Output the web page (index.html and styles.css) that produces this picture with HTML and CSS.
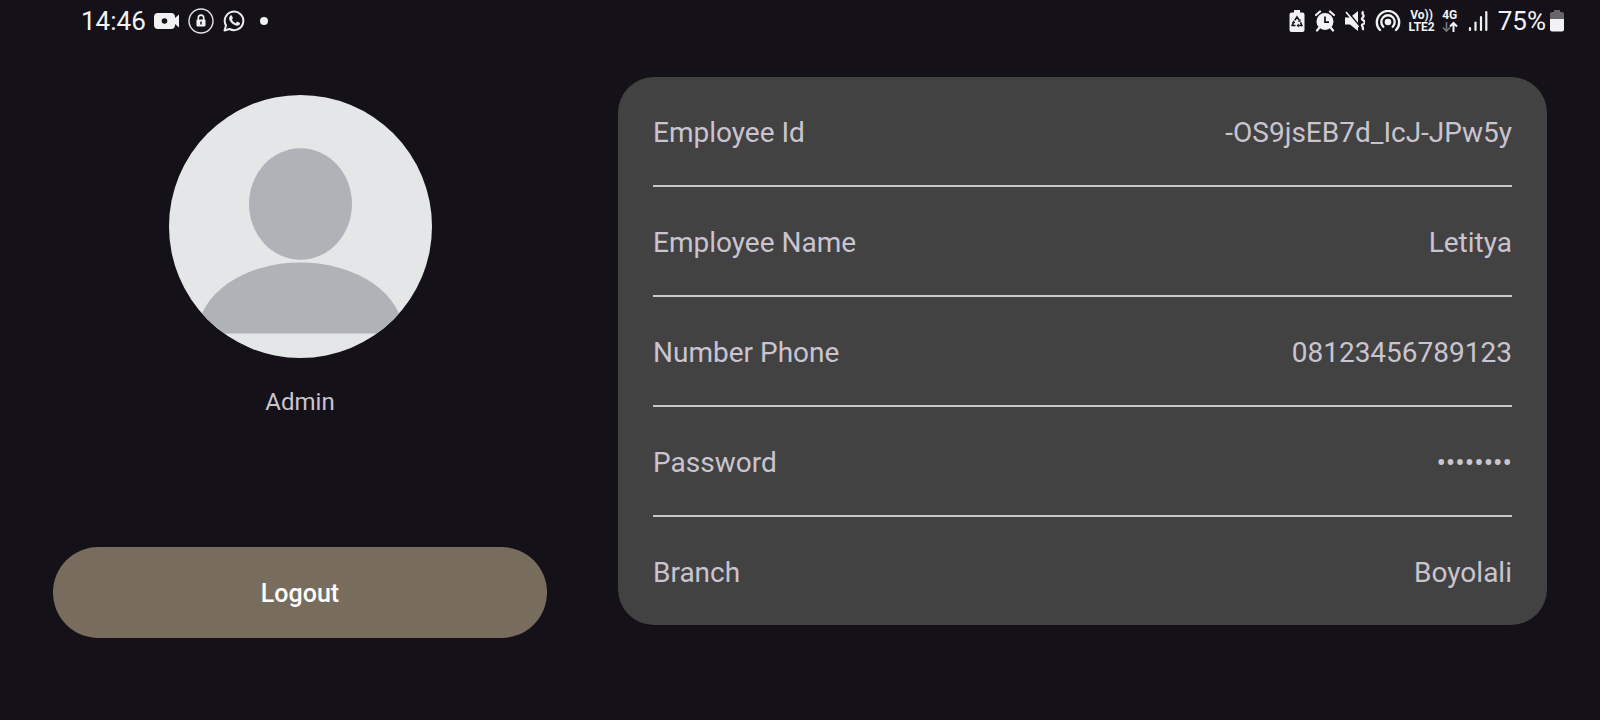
FILE: index.html
```html
<!DOCTYPE html>
<html lang="en">
<head>
<meta charset="utf-8">
<meta name="viewport" content="width=device-width, initial-scale=1">
<title>Profile</title>
<link rel="stylesheet" href="styles.css">
</head>
<body>
<header class="status-bar">
  <div class="status-left">
    <time class="status-text">14:46</time>
    <svg width="26" height="26" viewBox="0 0 26 26" aria-hidden="true">
      <path fill="#f2f2f4" fill-rule="evenodd" d="M4 5h13a4 4 0 0 1 4 4v1l4-3.500v13l-4-3.500v1a4 4 0 0 1-4 4H4a4 4 0 0 1-4-4V9a4 4 0 0 1 4-4zM10.500 10.200a2.800 2.800 0 1 0 0 5.600 2.800 2.800 0 0 0 0-5.600z"/>
    </svg>
    <svg width="26" height="26" viewBox="0 0 26 26" aria-hidden="true">
      <circle cx="13" cy="13" r="12" fill="none" stroke="#e4e4e6" stroke-width="1.400"/>
      <path d="M10.300 12V9.800a2.700 2.700 0 0 1 5.400 0V12" fill="none" stroke="#f2f2f4" stroke-width="1.600"/>
      <rect x="8.500" y="11.500" width="9" height="7" rx="1" fill="#f2f2f4"/>
      <path d="M13 13.500v3" stroke="#141218" stroke-width="1.500"/>
    </svg>
    <svg width="24" height="24" viewBox="0 0 24 24" aria-hidden="true">
      <path d="M2.500 21.500l1.500-5a9.300 9.300 0 1 1 3.600 3.500z" fill="none" stroke="#ececee" stroke-width="2" stroke-linejoin="round"/>
      <path d="M8.600 6.600c.5-.4 1.100-.3 1.300.2l.9 2c.2.400 0 .8-.9 1.800.8 1.700 2 2.900 3.800 3.600l1-1.200c.3-.4.600-.4 1-.2l1.900.9c.5.300.5.700.3 1.400-.4 1.200-2 1.900-3.200 1.700-3.700-.7-6.700-3.600-7.500-6.700-.3-1.400.4-2.700 1.400-3.500z" fill="#ececee"/>
    </svg>
    <span class="more-dot"></span>
  </div>
  <div class="status-right">
    <div class="status-group">
      <svg width="16" height="22" viewBox="0 0 16 22" aria-hidden="true">
        <path d="M5 0h6v2.500h2.500a2 2 0 0 1 2 2V20a2 2 0 0 1-2 2h-11a2 2 0 0 1-2-2V4.500a2 2 0 0 1 2-2H5z" fill="#f2f2f4"/>
        <path d="M5.700 10.400L8 7l2.300 3.400M11.500 12.300l1.300 3.200H9.500M6.500 15.500H3.200l1.400-3.400" fill="none" stroke="#141218" stroke-width="1.600"/>
        <path d="M11.600 9v2.700H8.900zM9.800 13.500v4l-2.300-2zM3 12.600l1.900-2 1.400 2.600z" fill="#141218"/>
      </svg>
      <svg width="20" height="22" viewBox="0 0 20 22" aria-hidden="true">
        <circle cx="10" cy="11.500" r="8.500" fill="#f2f2f4"/>
        <path d="M1 5l4-3.500M19 5l-4-3.500M4 18l-2 2.500M16 18l2 2.500" stroke="#f2f2f4" stroke-width="2.200" stroke-linecap="round"/>
        <path d="M10 6.500v5.700h4" fill="none" stroke="#141218" stroke-width="1.700"/>
      </svg>
      <svg width="20" height="22" viewBox="0 0 20 22" aria-hidden="true">
        <path d="M0 7.500h5L13 1v20l-8-6.500H0z" fill="#f2f2f4"/>
        <path d="M2.500 1.500l12 14.500" stroke="#141218" stroke-width="1.800"/>
        <path d="M1 2l12.500 15" stroke="#f2f2f4" stroke-width="1.800"/>
        <path d="M18.500 1.500c-3 2 1 3 0 5s-3 2 0 4 1 3-1 4 2 3 0 5.500" fill="none" stroke="#f2f2f4" stroke-width="2.200"/>
      </svg>
      <svg width="26" height="22" viewBox="0 0 26 22" aria-hidden="true">
        <circle cx="13" cy="12" r="3.300" fill="#f2f2f4"/>
        <path d="M8.300 16.700a6.700 6.700 0 1 1 9.400 0M5 20a11.200 11.200 0 1 1 16 0" fill="none" stroke="#f2f2f4" stroke-width="2.300" stroke-linecap="round"/>
      </svg>
    </div>
    <span class="stacked"><span>Vo))</span><span>LTE2</span></span>
    <div class="status-group">
      <span class="stacked">
        <span>4G</span>
        <svg width="16" height="12" viewBox="0 0 16 12" aria-hidden="true">
          <path d="M4.500 1v9M1 6.500L4.500 10 8 6.500" fill="none" stroke="#77757b" stroke-width="1.600"/>
          <path d="M11.500 11V2M8 5.500L11.500 2 15 5.500" fill="none" stroke="#f2f2f4" stroke-width="2"/>
        </svg>
      </span>
      <svg width="20" height="22" viewBox="0 0 20 22" aria-hidden="true">
        <path d="M2 18v2M7.500 12.500V20M13 7v13M18.300 2v18" stroke="#f2f2f4" stroke-width="2.200" stroke-linecap="round"/>
      </svg>
      <span class="battery-level">
        <span class="status-text">75%</span>
        <svg width="14" height="22" viewBox="0 0 14 22" aria-hidden="true">
          <path d="M4 0h6v2h2a2 2 0 0 1 2 2v5H0V4a2 2 0 0 1 2-2h2z" fill="#67656b"/>
          <path d="M0 9h14v10.500a2 2 0 0 1-2 2H2a2 2 0 0 1-2-2z" fill="#f2f2f4"/>
        </svg>
      </span>
    </div>
  </div>
</header>
<main class="profile">
  <section class="account">
    <svg class="avatar" viewBox="0 0 263 263" role="img" aria-label="Profile picture">
      <defs><clipPath id="disc"><circle cx="131.500" cy="131.500" r="131.500"/></clipPath></defs>
      <g clip-path="url(#disc)">
        <rect width="263" height="263" fill="#e4e6e8"/>
        <ellipse cx="131.500" cy="109" rx="51.500" ry="55.700" fill="#afb3b8"/>
        <path d="M29 238.500a102.500 71 0 0 1 205 0z" fill="#afb3b8"/>
      </g>
    </svg>
    <p class="role">Admin</p>
    <button class="logout" type="button">Logout</button>
  </section>
  <dl class="details">
    <div class="row"><dt>Employee Id</dt><dd>-OS9jsEB7d_IcJ-JPw5y</dd></div>
    <div class="row"><dt>Employee Name</dt><dd>Letitya</dd></div>
    <div class="row"><dt>Number Phone</dt><dd>08123456789123</dd></div>
    <div class="row"><dt>Password</dt><dd>••••••••</dd></div>
    <div class="row"><dt>Branch</dt><dd>Boyolali</dd></div>
  </dl>
</main>
</body>
</html>
```
FILE: styles.css
```css
* {
  box-sizing: border-box;
}

body {
  margin: 0;
  min-height: 100vh;
  background: #141218;
  color: #cac4d0;
  font-family: Roboto, "Noto Sans", sans-serif;
}

.status-bar {
  display: flex;
  justify-content: space-between;
  align-items: center;
  height: 42px;
  padding: 0 36px 0 81px;
  color: #f2f2f4;
}

.status-left,
.status-right,
.status-group {
  display: flex;
  align-items: center;
}

.status-right {
  gap: 7px;
}

.status-left {
  gap: 8px;
}

.status-group {
  gap: 10px;
}

.status-text {
  font-size: 26px;
  line-height: 32px;
}

.more-dot {
  width: 8px;
  height: 8px;
  margin-left: 6px;
  border-radius: 50%;
  background: #f2f2f4;
}

.stacked {
  display: flex;
  flex-direction: column;
  align-items: center;
  font-size: 12px;
  line-height: 12px;
  font-weight: 700;
}

.battery-level {
  display: flex;
  align-items: center;
  gap: 4px;
}

.profile {
  display: grid;
  grid-template-columns: 494fr 929fr;
  column-gap: 71px;
  align-items: start;
  padding: 35px 53px;
}

.account {
  display: flex;
  flex-direction: column;
  align-items: center;
  padding-top: 18px;
}

.avatar {
  width: 263px;
  height: 263px;
}

.role {
  margin: 28px 0 0;
  font-size: 24px;
  line-height: 32px;
}

.logout {
  width: 100%;
  margin-top: 129px;
  padding: 31px 30px 28px;
  border: 0;
  border-radius: 46px;
  background: #786c5d;
  color: #ffffff;
  font: 500 25px/32px Roboto, "Noto Sans", sans-serif;
  cursor: pointer;
}

.details {
  margin: 0;
  padding: 0 35px;
  border-radius: 36px;
  background: #424242;
  font-size: 28px;
  line-height: 36px;
}

.row {
  display: flex;
  justify-content: space-between;
  padding: 38px 0 34px;
}

.row + .row {
  border-top: 2px solid #c8c8c8;
}

.row dd {
  margin: 0;
}
```
